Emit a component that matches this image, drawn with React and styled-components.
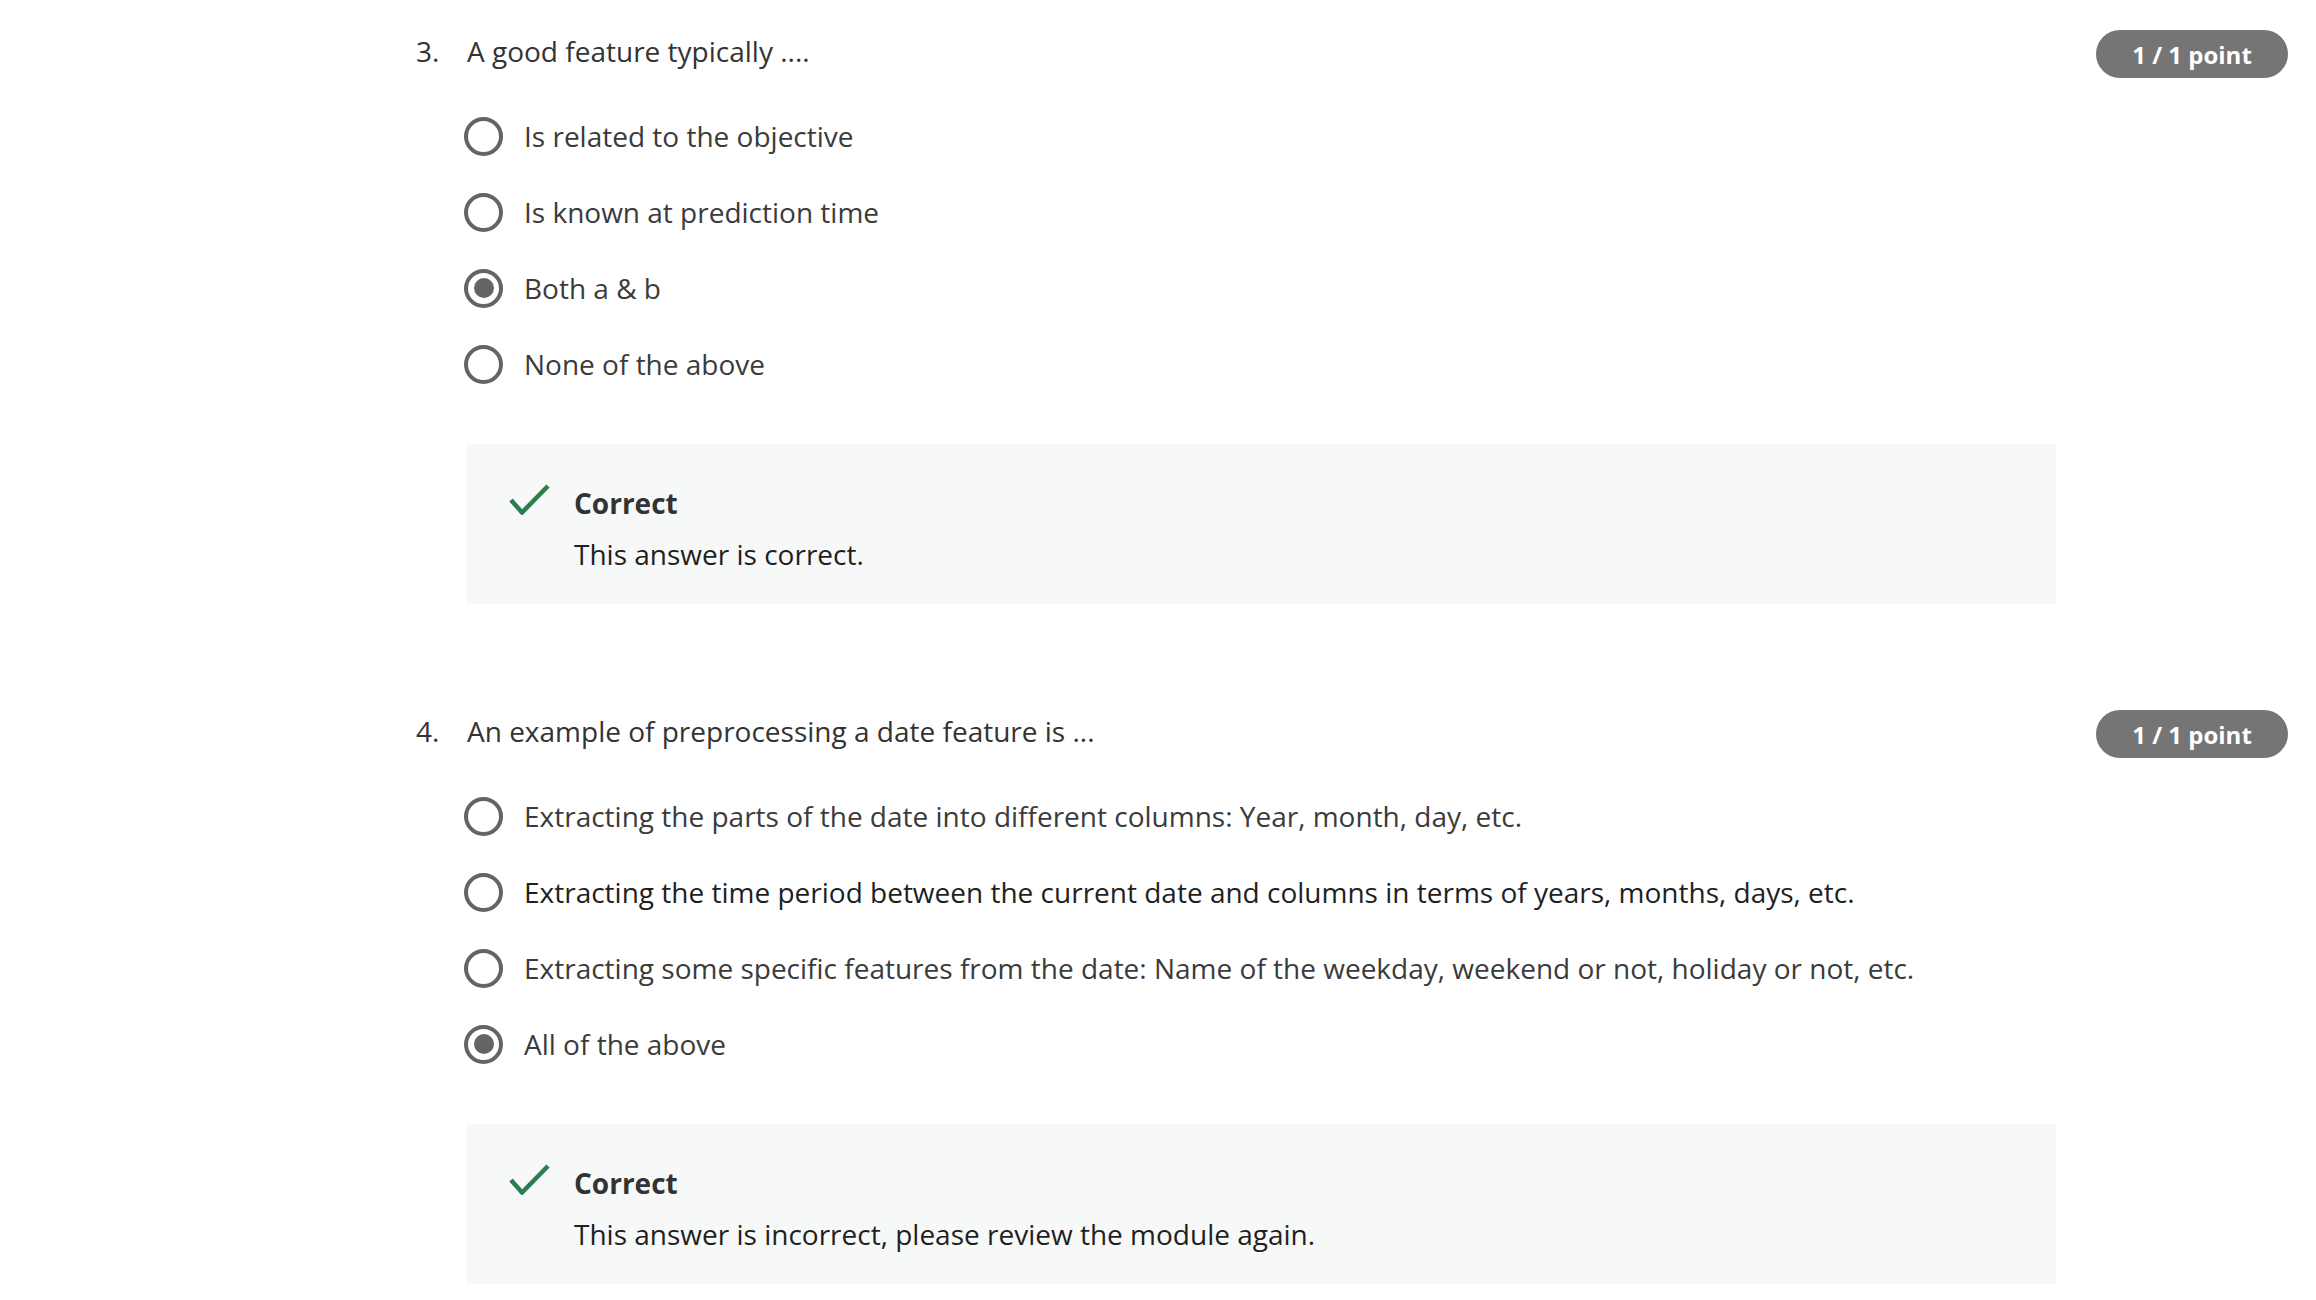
import styled, { createGlobalStyle } from 'styled-components';

const GlobalStyle = createGlobalStyle`
  body {
    margin: 0;
    background: #ffffff;
    font-family: "Open Sans", "Liberation Sans", sans-serif;
  }
`;

const questions = [
  {
    number: '3.',
    text: 'A good feature typically ....',
    points: '1 / 1 point',
    options: [
      { label: 'Is related to the objective' },
      { label: 'Is known at prediction time' },
      { label: 'Both a & b', selected: true },
      { label: 'None of the above' }
    ],
    feedback: 'This answer is correct.'
  },
  {
    number: '4.',
    text: 'An example of preprocessing a date feature is ...',
    points: '1 / 1 point',
    options: [
      { label: 'Extracting the parts of the date into different columns: Year, month, day, etc.' },
      { label: 'Extracting the time period between the current date and columns in terms of years, months, days, etc.', hovered: true },
      { label: 'Extracting some specific features from the date: Name of the weekday, weekend or not, holiday or not, etc.' },
      { label: 'All of the above', selected: true }
    ],
    feedback: 'This answer is incorrect, please review the module again.'
  }
];

const CheckIcon = () => (
  <svg width="41" height="31" viewBox="0 0 41 31" fill="none">
    <polyline
      points="2,16 13,28.5 39,2"
      stroke="#2e7d4f"
      strokeWidth="4.5"
      strokeLinecap="butt"
      strokeLinejoin="miter"
    />
  </svg>
);

const App = () => (
  <>
    <GlobalStyle />
    <Page>
      {questions.map((q) => (
        <Question key={q.number}>
          <Header>
            <Number>{q.number}</Number>
            <Prompt>{q.text}</Prompt>
            <Badge>{q.points}</Badge>
          </Header>
          <Options>
            {q.options.map((o) => (
              <Option key={o.label}>
                <Radio $selected={o.selected} />
                <OptionLabel $hovered={o.hovered}>{o.label}</OptionLabel>
              </Option>
            ))}
          </Options>
          <Feedback>
            <IconSlot>
              <CheckIcon />
            </IconSlot>
            <FeedbackBody>
              <FeedbackTitle>Correct</FeedbackTitle>
              <FeedbackText>{q.feedback}</FeedbackText>
            </FeedbackBody>
          </Feedback>
        </Question>
      ))}
    </Page>
  </>
);

const Page = styled.main`
  margin-left: 416px;
  width: 1872px;
`;

const Question = styled.section`
  padding: 30px 0 76px;
`;

const Header = styled.div`
  display: flex;
  align-items: flex-start;
  height: 48px;
`;

const Number = styled.span`
  width: 51px;
  font-size: 28px;
  line-height: 42px;
  color: #333333;
`;

const Prompt = styled.h3`
  margin: 0;
  font-size: 28px;
  line-height: 42px;
  font-weight: 400;
  color: #333333;
`;

const Badge = styled.span`
  margin-left: auto;
  display: flex;
  align-items: center;
  justify-content: center;
  width: 192px;
  height: 48px;
  border-radius: 24px;
  background: #757575;
  color: #ffffff;
  font-size: 24px;
  font-weight: 700;
`;

const Options = styled.div`
  display: flex;
  flex-direction: column;
  margin: 20px 0 0 48px;
`;

const Option = styled.label`
  display: flex;
  align-items: center;
  height: 76px;
  gap: 21px;
`;

const Radio = styled.span`
  position: relative;
  flex: none;
  width: 39px;
  height: 39px;
  box-sizing: border-box;
  border: 4px solid #646464;
  border-radius: 50%;

  &::after {
    content: '';
    display: ${(p) => (p.$selected ? 'block' : 'none')};
    position: absolute;
    top: 5.5px;
    left: 5.5px;
    width: 20px;
    height: 20px;
    border-radius: 50%;
    background: #646464;
  }
`;

const OptionLabel = styled.span`
  font-size: 28px;
  color: ${(p) => (p.$hovered ? '#1f1f1f' : '#3b3b3b')};
`;

const Feedback = styled.div`
  display: flex;
  gap: 24px;
  box-sizing: border-box;
  width: 1590px;
  height: 160px;
  margin: 42px 0 0 50px;
  padding: 40px 28px 0 43px;
  background: #f7f9f9;
`;

const IconSlot = styled.div`
  flex: none;
  width: 41px;
  height: 31px;
`;

const FeedbackBody = styled.div`
  display: flex;
  flex-direction: column;
  gap: 11px;
  margin-top: -1px;
`;

const FeedbackTitle = styled.div`
  font-size: 28px;
  line-height: 40px;
  font-weight: 700;
  color: #333333;
`;

const FeedbackText = styled.div`
  font-size: 28px;
  line-height: 40px;
  color: #1f1f1f;
`;

export default App;
